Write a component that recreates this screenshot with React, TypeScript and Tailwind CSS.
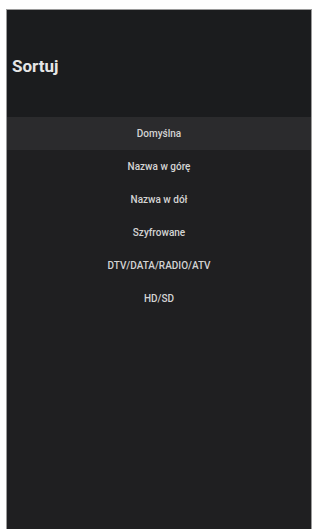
import React from 'react';

const OPTIONS = ['Domyślna', 'Nazwa w górę', 'Nazwa w dół', 'Szyfrowane', 'DTV/DATA/RADIO/ATV', 'HD/SD'];

export default function App() {
  return (
    <div className="w-[315px] h-[529px] bg-white pt-[9px] pl-[6px] pr-[3px] overflow-hidden" style={{ fontFamily: 'Roboto, "Liberation Sans", Arial, sans-serif' }}>
      <div className="h-full border-x border-t border-[#9a9a9a] bg-[#1f1f21] flex flex-col">
        <div className="h-[107px] bg-[#1b1c1e] flex items-center px-[5px] pt-[6px]">
          <h1 className="text-[17px] font-bold text-[#e6e6e6]">Sortuj</h1>
        </div>
        <div className="flex flex-col">
          {OPTIONS.map((o, i) => (
            <div
              key={o}
              className={`h-[33px] flex items-center justify-center text-[10px] font-medium text-[#d4d4d4] ${i === 0 ? 'bg-[#2b2b2d]' : ''}`}
            >
              {o}
            </div>
          ))}
        </div>
      </div>
    </div>
  );
}
